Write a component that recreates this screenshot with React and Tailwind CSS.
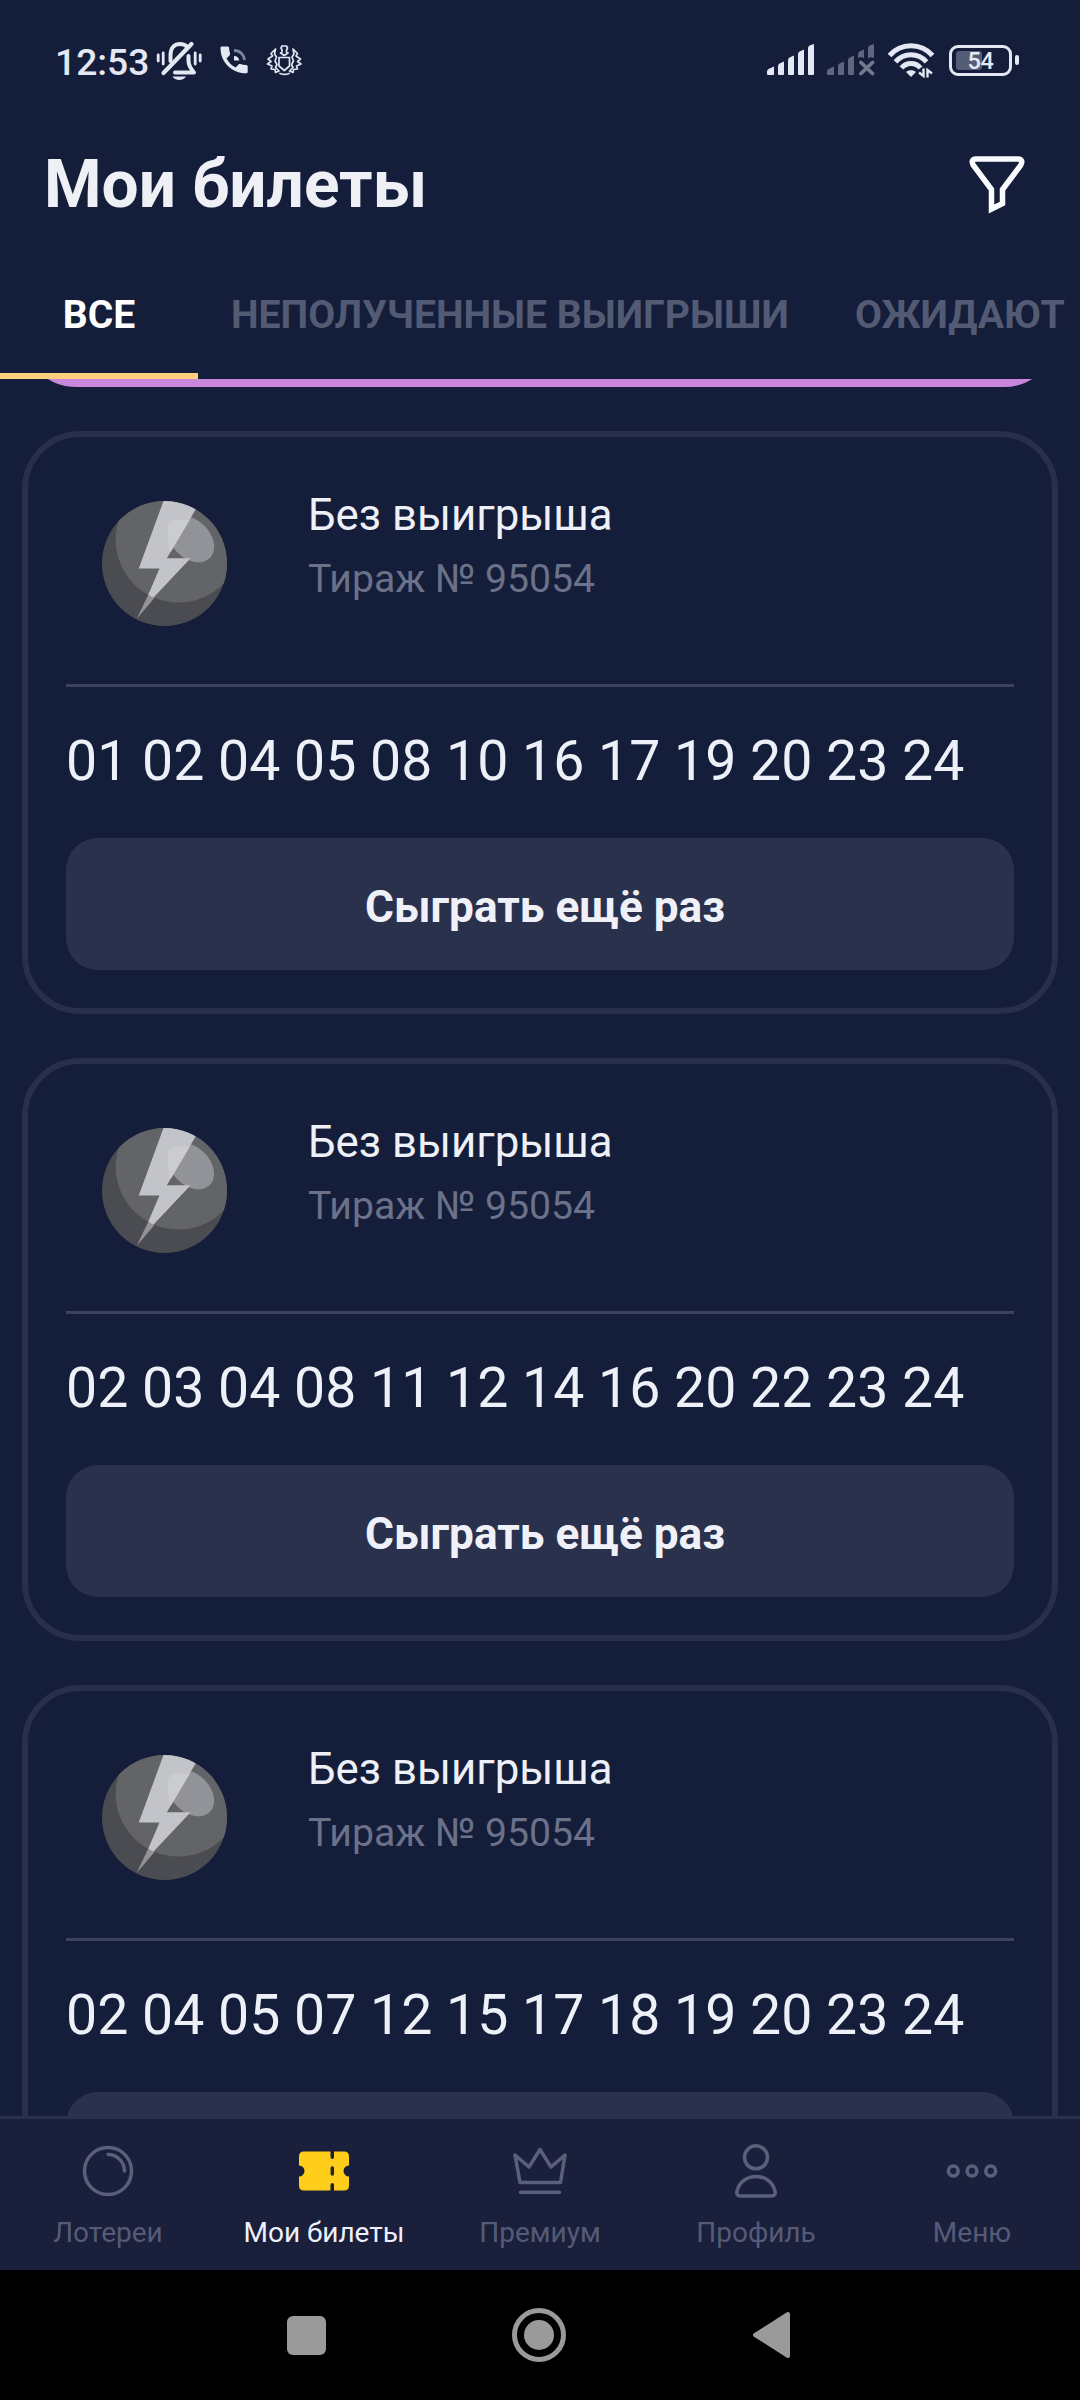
const tickets = [
  { numbers: '01 02 04 05 08 10 16 17 19 20 23 24', action: 'Сыграть ещё раз' },
  { numbers: '02 03 04 08 11 12 14 16 20 22 23 24', action: 'Сыграть ещё раз' },
  { numbers: '02 04 05 07 12 15 17 18 19 20 23 24' },
];

function BellOff() {
  return (
    <svg width="46" height="40" viewBox="156 41 46 40" fill="none" stroke="#e4e8f4" strokeWidth="4" strokeLinecap="round" strokeLinejoin="round">
      <path d="M170.500 61V55C170.500 47.500 175 44 180 44C183 44 185.500 45 187.500 47" />
      <path d="M188.500 56V61C188.500 66 191 69 194 72.500H175" />
      <path d="M191.500 44L163.500 73" strokeWidth="4.200" />
      <path d="M172.500 76.500H186C183.500 81 175 81 172.500 76.500Z" fill="#e4e8f4" stroke="none" />
      <path d="M158.200 55V61M163.200 53V64M195.200 53V64M200.200 55V61" strokeWidth="2.800" />
    </svg>
  );
}

function PhoneCall() {
  return (
    <svg width="28" height="28" viewBox="220 46 28 28" fill="none">
      <path d="M222 46.500H227.500C228.400 46.500 229 47 229.100 48C229.200 50 229.500 52 230 53.600C230.200 54.300 230.100 54.800 229.700 55.300L226.500 58.600C228.800 62.800 231.300 65.400 235.600 67.500L238.700 64.300C239.200 63.900 239.800 63.800 240.400 64C242.200 64.600 244 64.900 246 64.900C247 64.900 247.700 65.600 247.700 66.500V71.700C247.700 72.700 247 73.300 246 73.300C231.800 73.300 220.500 62 220.500 48.200C220.500 47.200 221 46.500 222 46.500Z" fill="#e4e8f4" />
      <path d="M234 50.500C240 50.500 244 54.500 244.500 60" stroke="#7d849b" strokeWidth="2.800" />
      <path d="M234 56C237 56 239 58 239.300 60.500H234Z" fill="#e4e8f4" />
    </svg>
  );
}

function Emblem() {
  return (
    <svg width="38" height="32" viewBox="265 44 38 32" fill="none" stroke="#dfe4f1" strokeWidth="1.700" strokeLinejoin="round" strokeLinecap="round">
      <path d="M282 46H286.500L287.500 48L286.500 50V52L288 53L284.300 55.500L280.500 53L282 52V50L281 48Z" />
      <path d="M279 57.500H289.500V66L284.300 70.500L279 66Z" />
      <path d="M275.500 49L271 53.500L272.500 56L268 59L271 61.500L267.500 64L272 66L271 69L275 69.500L275.500 72.500L279 71M275.500 49L274.500 54L276.500 57L275 61L277 64.500L275.500 67.500L279 71" />
      <path d="M293 49L297.500 53.500L296 56L300.500 59L297.500 61.500L301 64L296.500 66L297.500 69L293.500 69.500L293 72.500L289.500 71M293 49L294 54L292 57L293.500 61L291.500 64.500L293 67.500L289.500 71" />
      <path d="M280 73.500C283 74.800 286 74.800 289 73.500" />
    </svg>
  );
}

function Signal({ weak }) {
  return weak ? (
    <svg width="48" height="32" viewBox="0 0 48 32" fill="#5f6680">
      <path d="M0 27.500Q0 26 1.500 25L7 22.500V30Q7 31 6 31H1Q0 31 0 30Z" />
      <path d="M11 22Q11 20.500 12.500 19.500L17 17.500V30Q17 31 16 31H12Q11 31 11 30Z" />
      <path d="M21 16Q21 14.500 22.500 13.500L27 11.500V30Q27 31 26 31H22Q21 31 21 30Z" />
      <path d="M31 10Q31 8.500 32.500 7.500L37 5.500V14L34 13L31 14Z" />
      <path d="M41 4Q41 2.500 42.500 1.500L47 0V12Q47 14 46 14L44 13L41 14.500Z" />
      <path d="M34 18.500L45.500 29.500M45.500 18.500L34 29.500" stroke="#727991" strokeWidth="3.800" strokeLinecap="round" />
    </svg>
  ) : (
    <svg width="48" height="32" viewBox="0 0 48 32" fill="#e4e8f4">
      <path d="M0 27.500Q0 26 1.500 25L7 22.500V30Q7 31 6 31H1Q0 31 0 30Z" />
      <path d="M11 22Q11 20.500 12.500 19.500L17 17.500V30Q17 31 16 31H12Q11 31 11 30Z" />
      <path d="M21 16Q21 14.500 22.500 13.500L27 11.500V30Q27 31 26 31H22Q21 31 21 30Z" />
      <path d="M31 10Q31 8.500 32.500 7.500L37 5.500V30Q37 31 36 31H32Q31 31 31 30Z" />
      <path d="M41 4Q41 2.500 42.500 1.500L47 0V30Q47 31 46 31H42Q41 31 41 30Z" />
    </svg>
  );
}

function Wifi() {
  return (
    <svg width="48" height="36" viewBox="887 42 48 36" fill="none" stroke="#e4e8f4" strokeWidth="5">
      <path d="M889.500 55.500C901 42.500 921 42.500 932.500 55.500" />
      <path d="M895.500 61.800C904 52.300 918 52.300 926.500 61.800" />
      <path d="M901.500 68C906.500 62 915.500 62 920.500 68" />
      <path d="M911 77L906 72C908.500 69.500 913.500 69.500 916 72Z" fill="#e4e8f4" stroke="none" />
      <path d="M919 72.500L923.500 76V68.500M927.500 77.500V70L932 73.500" strokeWidth="2.400" />
    </svg>
  );
}

function Battery() {
  return (
    <div className="flex items-center gap-[3px]">
      <div className="flex h-[31px] w-[63px] items-center rounded-[9px] border-[3px] border-[#e4e8f4] p-[3.500px]">
        <div className="flex h-[19px] w-[26px] items-center rounded-[3px] bg-[#555c76] pt-[2px] pl-[12px] text-[23.500px] leading-[19px] font-medium tracking-[-0.400px] text-[#e4e8f4]">54</div>
      </div>
      <div className="h-[10px] w-[4px] rounded-[2px] bg-[#e4e8f4]" />
    </div>
  );
}

function StatusBar() {
  return (
    <div className="flex h-[120px] shrink-0 items-start justify-between pt-[41px] pl-[55px] pr-[61px]">
      <div className="flex h-[40px] items-center">
        <span className="w-[101px] pt-[2px] text-[37.200px] leading-[40px] font-medium text-[#e4e8f4]">12:53</span>
        <BellOff />
        <div className="ml-[18px] mb-[3px]"><PhoneCall /></div>
        <div className="ml-[17px] mb-[2px]"><Emblem /></div>
      </div>
      <div className="flex h-[40px] items-center pb-[2px]">
        <Signal />
        <div className="ml-[12px]"><Signal weak /></div>
        <div className="ml-[12px]"><Wifi /></div>
        <div className="ml-[14px]"><Battery /></div>
      </div>
    </div>
  );
}

function Funnel() {
  return (
    <svg width="58" height="62" viewBox="968 154 58 62" fill="none" stroke="#fafbff" strokeWidth="5.500">
      <path d="M991.500 209V189.500L973.500 165.500Q970 159.500 976 159H1018Q1024 159.500 1020.500 165.500L1002.500 189.500V203.500Z" />
    </svg>
  );
}

function Ball() {
  return (
    <svg width="125" height="125" viewBox="0 0 374 374">
      <defs>
        <clipPath id="ball"><circle cx="187" cy="187" r="187" /></clipPath>
      </defs>
      <g clipPath="url(#ball)">
        <rect width="374" height="374" fill="#4b4c51" />
        <circle cx="229" cy="116" r="188" fill="#636468" />
        <ellipse cx="266" cy="114" rx="80" ry="57" transform="rotate(45 266 114)" fill="#929398" />
        <path d="M184 0H240L281 24L194 171H265L153 290L138 281L172 202H110Z" fill="#c3c4ca" />
        <path d="M198 72Q206 50 262 57L205 153Q193 115 198 72Z" fill="#cbccd0" />
        <path d="M138 281Q147 287 157 290L104 352Z" fill="#929398" />
      </g>
    </svg>
  );
}

function Ticket({ numbers, action }) {
  return (
    <article className="h-[583px] shrink-0 rounded-[58px] border-[6px] border-[#272f4a] px-[38px]">
      <div className="flex h-[247px] pl-[36px]">
        <div className="pt-[64px]"><Ball /></div>
        <div className="pt-[50px] pl-[81px]">
          <div className="text-[43.800px] leading-[56px] text-[#eef0f8]">Без выигрыша</div>
          <div className="mt-[9px] text-[39.200px] leading-[54px] text-[#6b7188]">Тираж № 95054</div>
        </div>
      </div>
      <div className="h-[3px] bg-[#3b435c]" />
      <div className="pt-[43px] text-[55.400px] leading-[64px] whitespace-nowrap text-[#eef0f8]">{numbers}</div>
      <button className="mt-[44px] block h-[132px] w-full rounded-[32px] bg-[#2a314d] pt-[7px] pl-[10px] text-[44.200px] font-bold text-[#f0f1f8]">{action}</button>
    </article>
  );
}

const iconProps = { width: 60, height: 60, fill: 'none', stroke: '#5a607b', strokeWidth: 3.5, strokeLinecap: 'round', strokeLinejoin: 'round' };

function LotteryIcon() {
  return (
    <svg {...iconProps} viewBox="78 2141 60 60">
      <circle cx="108" cy="2171" r="23.500" />
      <path d="M108 2154.500C117 2154.500 124.500 2162 124.500 2171" />
    </svg>
  );
}

function TicketIcon() {
  return (
    <svg width="60" height="60" viewBox="294 2141 60 60" fill="#ffce1b">
      <path d="M304 2151.500H330.500V2157Q330.500 2159 332.300 2159T334 2157V2151.500H344Q349 2151.500 349 2156.500V2165.500A5.500 5.500 0 0 0 349 2176.500V2185.500Q349 2190.500 344 2190.500H334V2185Q334 2183 332.300 2183T330.500 2185V2190.500H304Q299 2190.500 299 2185.500V2176.500A5.500 5.500 0 0 0 299 2165.500V2156.500Q299 2151.500 304 2151.500Z" />
      <path d="M332.300 2168V2174" stroke="#292528" strokeWidth="3.500" strokeLinecap="round" />
    </svg>
  );
}

function CrownIcon() {
  return (
    <svg {...iconProps} viewBox="510 2141 60 60">
      <path d="M520 2182.500L515 2155L529 2167L540 2149.500L551 2167L565 2155L560.500 2182.500ZM520.500 2192.300H559.500" />
    </svg>
  );
}

function ProfileIcon() {
  return (
    <svg {...iconProps} viewBox="726 2141 60 60">
      <circle cx="756" cy="2157.300" r="11.500" />
      <path d="M740 2196H772Q776 2195.500 775 2191C770 2171.500 742 2171.500 737 2191Q736 2195.500 740 2196Z" />
    </svg>
  );
}

function MenuIcon() {
  return (
    <svg {...iconProps} viewBox="942 2141 60 60">
      <circle cx="953.300" cy="2171" r="4.900" />
      <circle cx="972" cy="2171" r="4.900" />
      <circle cx="990.700" cy="2171" r="4.900" />
    </svg>
  );
}

const navItems = [
  { label: 'Лотереи', Icon: LotteryIcon },
  { label: 'Мои билеты', Icon: TicketIcon, active: true },
  { label: 'Премиум', Icon: CrownIcon },
  { label: 'Профиль', Icon: ProfileIcon },
  { label: 'Меню', Icon: MenuIcon },
];

export default function App() {
  return (
    <div className="flex h-[2400px] w-[1080px] flex-col overflow-hidden bg-[#141d39] font-['Roboto',sans-serif]">
      <StatusBar />
      <header className="flex h-[132px] shrink-0 items-start justify-between pt-[23px] pr-[54px] pl-[44px]">
        <h1 className="pt-[2px] text-[65.800px] leading-[80px] font-bold whitespace-nowrap text-[#eef0f5]">Мои билеты</h1>
        <div className="pt-[11px]"><Funnel /></div>
      </header>
      <nav className="flex h-[127px] shrink-0 text-[39.100px] leading-[127px] font-bold whitespace-nowrap text-[#535b74]">
        <div className="w-[198px] shrink-0 border-b-[6px] border-[#fbcf7d] text-center text-white">ВСЕ</div>
        <div className="ml-[33px] w-[592px] shrink-0">НЕПОЛУЧЕННЫЕ ВЫИГРЫШИ</div>
        <div className="ml-[32px] shrink-0">ОЖИДАЮТ</div>
      </nav>
      <main className="flex min-h-0 flex-1 flex-col gap-[44px] overflow-hidden px-[22px]">
        <div className="flex h-[8px] shrink-0 flex-col justify-end overflow-hidden">
          <div className="h-[120px] shrink-0 rounded-[54px] bg-[#c887db]" />
        </div>
        {tickets.map((t) => <Ticket key={t.numbers} {...t} />)}
      </main>
      <footer className="grid h-[154px] shrink-0 grid-cols-5 border-t-[3px] border-[#2a304c] bg-[#1a1f3c]">
        {navItems.map(({ label, Icon, active }) => (
          <div key={label} className="flex flex-col items-center pt-[22px]">
            <Icon />
            <span className={active ? 'mt-[14px] text-[28px] leading-[36px] text-[#eef0fb]' : 'mt-[14px] text-[28px] leading-[36px] text-[#555b77]'}>{label}</span>
          </div>
        ))}
      </footer>
      <div className="flex h-[130px] shrink-0 items-center justify-between bg-black pr-[290px] pl-[287px]">
        <div className="size-[39px] rounded-[6px] bg-[#9a9a9a]" />
        <div className="flex size-[54px] items-center justify-center rounded-full border-[5px] border-[#9a9a9a]">
          <div className="size-[30px] rounded-full bg-[#9a9a9a]" />
        </div>
        <svg width="38" height="48" viewBox="0 0 38 48" fill="#9a9a9a" stroke="#9a9a9a" strokeWidth="4" strokeLinejoin="round">
          <path d="M3 24L36 3V45Z" />
        </svg>
      </div>
    </div>
  );
}
